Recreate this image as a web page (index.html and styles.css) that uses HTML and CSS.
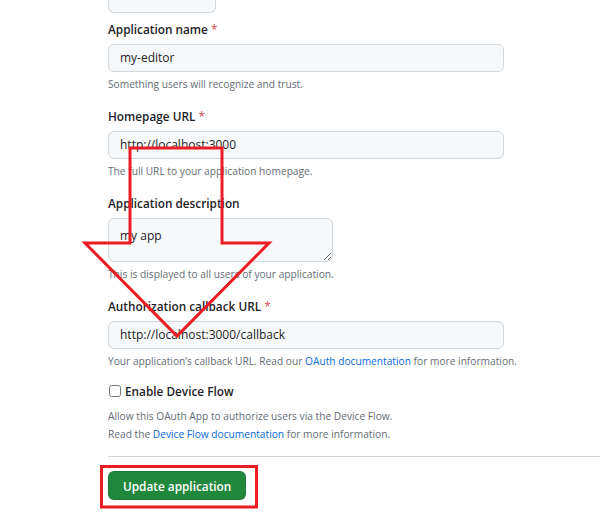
FILE: index.html
```html
<!DOCTYPE html>
<html>
<head>
<meta charset="utf-8">
<link rel="stylesheet" href="styles.css">
</head>
<body>
<main class="page">
  <div class="prev-field"></div>

  <div class="group first">
    <label class="label">Application name <span class="req">*</span></label>
    <div class="input">my-editor</div>
    <p class="hint">Something users will recognize and trust.</p>
  </div>

  <div class="group">
    <label class="label">Homepage URL <span class="req">*</span></label>
    <div class="input">http://localhost:3000</div>
    <p class="hint">The full URL to your application homepage.</p>
  </div>

  <div class="group">
    <label class="label">Application description</label>
    <textarea class="textarea">my app</textarea>
    <p class="hint">This is displayed to all users of your application.</p>
  </div>

  <div class="group">
    <label class="label">Authorization callback URL <span class="req">*</span></label>
    <div class="input">http://localhost:3000/callback</div>
    <p class="hint">Your application’s callback URL. Read our <a class="link">OAuth documentation</a> for more information.</p>
  </div>

  <div class="check-row">
    <input type="checkbox" class="check">
    <span class="check-label">Enable Device Flow</span>
  </div>
  <div class="note">
    <p>Allow this OAuth App to authorize users via the Device Flow.</p>
    <p>Read the <a class="link">Device Flow documentation</a> for more information.</p>
  </div>

  <hr class="divider">

  <button class="btn">Update application</button>
</main>

<svg class="overlay" width="600" height="524" viewBox="0 0 600 524">
  <polygon points="130,148 222,148 222,243 269,243 177,336 85,243 130,243" fill="none" stroke="#ec1c24" stroke-width="3"/>
  <rect x="101.5" y="466.5" width="155" height="40.5" fill="none" stroke="#ec1c24" stroke-width="3"/>
</svg>
</body>
</html>
```
FILE: styles.css
```css
html, body {
  margin: 0;
  padding: 0;
  background: #ffffff;
}
body {
  position: relative;
  width: 600px;
  height: 524px;
  overflow: hidden;
  font-family: "Open Sans", "Noto Sans", sans-serif;
  color: #1f2328;
}
.page {
  padding-left: 108px;
  display: flex;
  flex-direction: column;
  align-items: flex-start;
}
.prev-field {
  width: 108px;
  height: 13px;
  box-sizing: border-box;
  border: 1px solid #d0d7de;
  border-top: none;
  border-radius: 0 0 6px 6px;
  background: #f6f8fa;
}
.group {
  display: flex;
  flex-direction: column;
  align-items: flex-start;
  margin-top: 13px;
}
.group.first {
  margin-top: 6px;
}
.label {
  display: block;
  height: 20px;
  line-height: 21px;
  font-size: 11.8px;
  font-weight: 600;
  color: #1f2328;
  margin-bottom: 5px;
}
.req {
  color: #d9475a;
  font-weight: 400;
}
.input {
  box-sizing: border-box;
  width: 396px;
  height: 28px;
  line-height: 26px;
  padding: 0 11px;
  border: 1px solid #d0d7de;
  border-radius: 6px;
  background: #f6f8fa;
  font-size: 12px;
  color: #1f2328;
}
.textarea {
  box-sizing: border-box;
  width: 225px;
  height: 44px;
  margin: 0;
  padding: 7px 11px;
  border: 1px solid #d0d7de;
  border-radius: 6px;
  background: #f6f8fa;
  font-family: "Open Sans", "Noto Sans", sans-serif;
  font-size: 12px;
  line-height: 20px;
  color: #1f2328;
  resize: vertical;
  overflow: hidden;
}
.hint {
  margin: 3px 0 0;
  height: 18px;
  line-height: 18px;
  font-size: 10.2px;
  color: #656d76;
  white-space: nowrap;
}
.link {
  color: #0969da;
  text-decoration: none;
}
.check-row {
  display: flex;
  align-items: center;
  gap: 4px;
  height: 20px;
  margin-top: 11px;
}
.check {
  width: 12px;
  height: 12px;
  margin: 0 0 0 1px;
}
.check-label {
  font-size: 11.8px;
  font-weight: 600;
  line-height: 20px;
}
.note {
  margin-top: 6px;
}
.note p {
  margin: 0;
  height: 18px;
  line-height: 18px;
  font-size: 10.2px;
  color: #656d76;
  white-space: nowrap;
}
.divider {
  align-self: stretch;
  margin: 13px 0 0;
  border: none;
  border-top: 1px solid #d0d7de;
  height: 0;
}
.btn {
  margin-top: 14px;
  height: 29px;
  padding: 0 14px;
  box-sizing: border-box;
  white-space: nowrap;
  background: #1f883d;
  color: #ffffff;
  border: 1px solid rgba(31, 35, 40, 0.15);
  border-radius: 6px;
  font-family: "Open Sans", "Noto Sans", sans-serif;
  font-size: 11.8px;
  font-weight: 600;
}
.overlay {
  position: absolute;
  left: 0;
  top: 0;
  pointer-events: none;
}
```
